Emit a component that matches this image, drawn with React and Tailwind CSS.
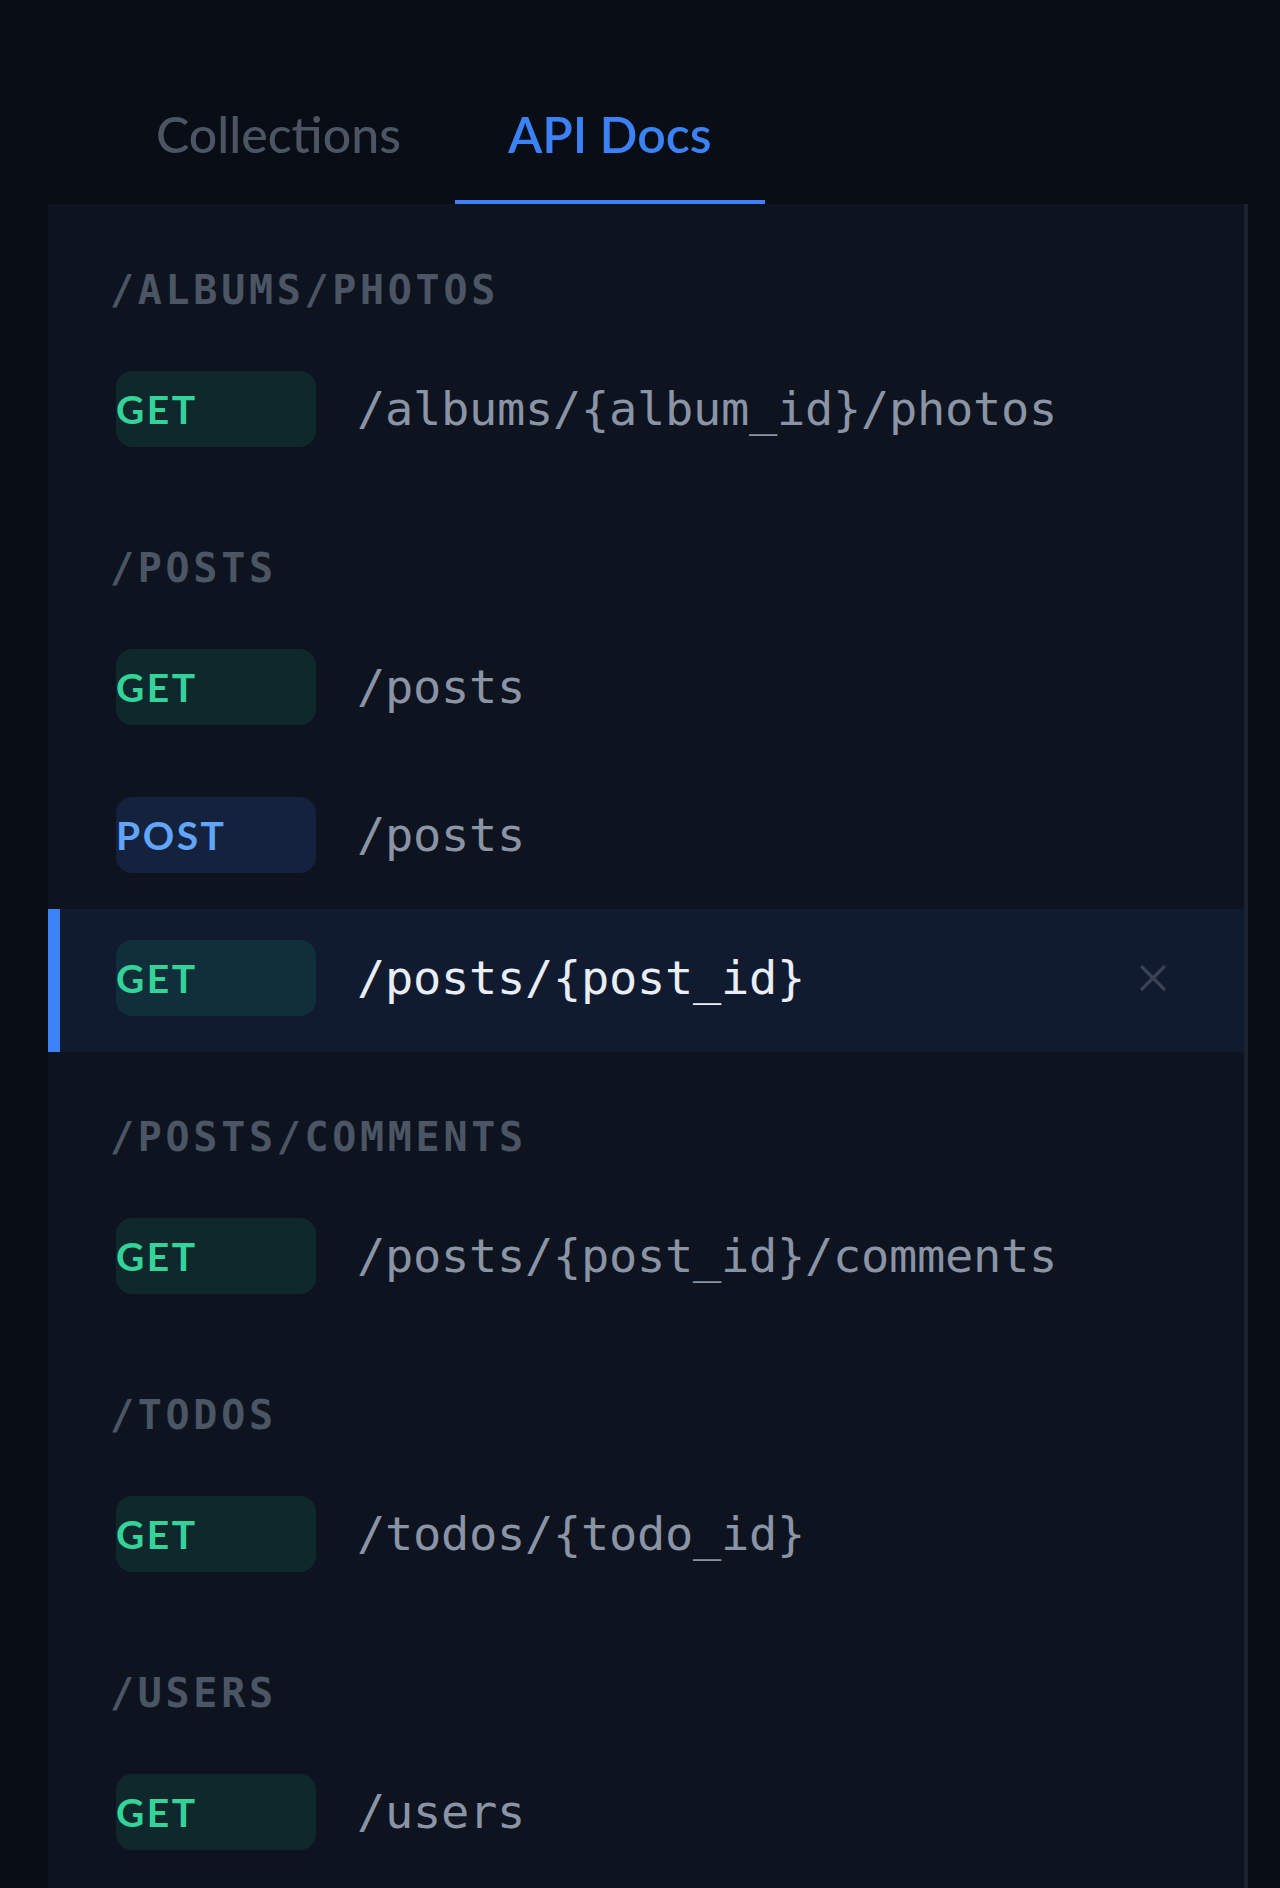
import React, { useState } from 'react';

const groups = [
  {
    name: '/ALBUMS/PHOTOS',
    routes: [{ method: 'GET', path: '/albums/{album_id}/photos' }],
  },
  {
    name: '/POSTS',
    routes: [
      { method: 'GET', path: '/posts' },
      { method: 'POST', path: '/posts' },
      { method: 'GET', path: '/posts/{post_id}', active: true },
    ],
  },
  {
    name: '/POSTS/COMMENTS',
    routes: [{ method: 'GET', path: '/posts/{post_id}/comments' }],
  },
  {
    name: '/TODOS',
    routes: [{ method: 'GET', path: '/todos/{todo_id}' }],
  },
  {
    name: '/USERS',
    routes: [{ method: 'GET', path: '/users' }],
  },
];

function MethodBadge({ method }) {
  const isGet = method === 'GET';
  return (
    <div
      className={
        'flex h-[76px] w-[200px] shrink-0 items-center rounded-[16px] font-["Lato",sans-serif] text-[39px] font-bold tracking-[2.5px] ' +
        (isGet ? 'bg-[rgba(16,185,129,0.13)] text-[#34d399]' : 'bg-[rgba(59,130,246,0.14)] text-[#60a5fa]')
      }
    >
      {method}
    </div>
  );
}

function RouteRow({ route }) {
  if (route.active) {
    return (
      <div className="flex items-center border-l-[12px] border-[#3b82f6] bg-[#111b30] pb-[36px] pl-[56px] pt-[31px]">
        <MethodBadge method={route.method} />
        <span className='ml-[41px] font-["DejaVu_Sans_Mono",monospace] text-[47px] tracking-[-0.3px] text-[#e8edf6]'>
          {route.path}
        </span>
        <button className="ml-auto mr-[78px] text-[#3a4252]">
          <svg width="26" height="26" viewBox="0 0 26 26" fill="none" stroke="currentColor" strokeWidth="3.2" strokeLinecap="round">
            <path d="M2 2 24 24M24 2 2 24" />
          </svg>
        </button>
      </div>
    );
  }
  return (
    <div className="flex items-center py-[36px] pl-[68px]">
      <MethodBadge method={route.method} />
      <span className='ml-[41px] font-["DejaVu_Sans_Mono",monospace] text-[47px] tracking-[-0.3px] text-[#8b94a5]'>
        {route.path}
      </span>
    </div>
  );
}

export default function App() {
  const [tab, setTab] = useState('docs');

  return (
    <div className="min-h-screen bg-[#090d16] pl-[48px] pr-[32px]">
      <div className="flex pl-[54px] pt-[70px] font-['Lato',sans-serif]">
        <button
          onClick={() => setTab('collections')}
          className={
            'border-b-4 px-[54px] pb-[36px] pt-[34px] text-[50px] leading-[60px] ' +
            (tab === 'collections' ? 'border-[#3b82f6] font-semibold text-[#3b82f6]' : 'border-transparent font-medium text-[#4b5563]')
          }
        >
          Collections
        </button>
        <button
          onClick={() => setTab('docs')}
          className={
            'border-b-4 px-[53px] pb-[36px] pt-[34px] text-[50px] leading-[60px] ' +
            (tab === 'docs' ? 'border-[#3b82f6] font-semibold text-[#3b82f6]' : 'border-transparent font-medium text-[#4b5563]')
          }
        >
          API Docs
        </button>
      </div>

      <div className="min-h-[1684px] border-r-4 border-[#1c2230] bg-[#0e1320] pt-[1px]">
        {groups.map(group => (
          <div key={group.name}>
            <div className='pb-[25px] pl-[62px] pt-[65px] font-["DejaVu_Sans_Mono",monospace] text-[40px] font-bold leading-[40px] tracking-[3.7px] text-[#4b5563]'>
              {group.name}
            </div>
            {group.routes.map(route => (
              <RouteRow key={route.method + route.path} route={route} />
            ))}
          </div>
        ))}
      </div>
    </div>
  );
}
